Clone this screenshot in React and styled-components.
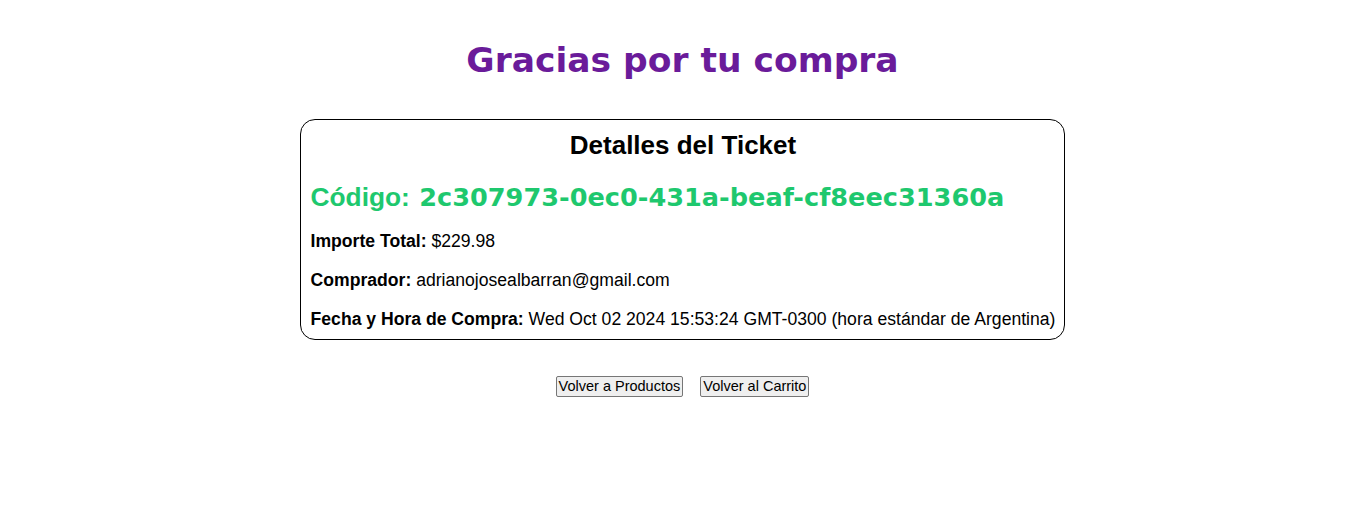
import React from 'react';
import styled, { createGlobalStyle } from 'styled-components';

const GlobalStyle = createGlobalStyle`
    body{
        margin: 0;
        background: #fff;
        font-family: "Liberation Sans", Arial, sans-serif;
        color: #000;
    }
`

const ticket = {
    code: '2c307973-0ec0-431a-beaf-cf8eec31360a',
    amount: 229.98,
    purchaser: 'adrianojosealbarran@gmail.com',
    date: 'Wed Oct 02 2024 15:53:24 GMT-0300 (hora estándar de Argentina)',
}

const App = () => {
    return (
        <Page>
            <GlobalStyle />
            <Title>Gracias por tu compra</Title>
            <Card>
                <CardTitle>Detalles del Ticket</CardTitle>
                <Code>
                    Código: <span>{ticket.code}</span>
                </Code>
                <Info><b>Importe Total:</b> ${ticket.amount}</Info>
                <Info><b>Comprador:</b> {ticket.purchaser}</Info>
                <Info><b>Fecha y Hora de Compra:</b> {ticket.date}</Info>
            </Card>
            <Actions>
                <Button>Volver a Productos</Button>
                <Button>Volver al Carrito</Button>
            </Actions>
        </Page>
    );
};

export default App;

const Page = styled.div`
    display: flex;
    flex-direction: column;
    align-items: center;
    padding-top: 40px;
`

const Title = styled.h1`
    margin: 0 0 39px;
    font-family: "DejaVu Sans", sans-serif;
    font-size: 34.5px;
    line-height: 40px;
    font-weight: 700;
    color: #6a1b9a;
`

const Card = styled.div`
    border: 1px solid #000;
    border-radius: 15px;
    padding: 10px 9px 10px 10px;
    display: flex;
    flex-direction: column;
`

const CardTitle = styled.h2`
    margin: 0 0 22px;
    text-align: center;
    font-size: 26px;
    line-height: 30px;
    font-weight: 700;
`

const Code = styled.p`
    margin: 0 0 19px;
    font-size: 26.3px;
    line-height: 30px;
    font-weight: 700;
    color: #1ec86e;
    span{
        margin-left: 2px;
        font-family: "DejaVu Sans", sans-serif;
        font-size: 25.6px;
    }
`

const Info = styled.p`
    margin: 0 0 19px;
    font-size: 17.6px;
    line-height: 20px;
    white-space: nowrap;
    &:last-child{
        margin-bottom: 0;
    }
`

const Actions = styled.div`
    display: flex;
    gap: 17px;
    margin-top: 36px;
`

const Button = styled.button`
    font-family: "Liberation Sans", Arial, sans-serif;
    font-size: 14.5px;
    line-height: 17px;
    padding: 1px 2px;
    background: #efefef;
    border: 1px solid #767676;
    border-radius: 2px;
    color: #000;
`
